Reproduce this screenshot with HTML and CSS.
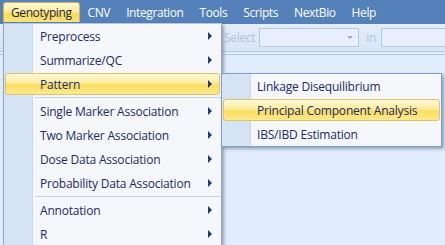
FILE: index.html
```html
<!DOCTYPE html>
<html lang="en">
<head>
  <meta charset="UTF-8" />
  <title>Genotyping Menu</title>
  <link rel="stylesheet" href="styles.css">
</head>
<body>
  <div class="app">
    <div class="menubar">
      <span class="menubar-item active">Genotyping</span>
      <span class="menubar-item">CNV</span>
      <span class="menubar-item">Integration</span>
      <span class="menubar-item">Tools</span>
      <span class="menubar-item">Scripts</span>
      <span class="menubar-item">NextBio</span>
      <span class="menubar-item">Help</span>
    </div>

    <div class="toolbar">
      <div class="toolbar-group">
        <span class="tb-label">Select</span>
        <div class="combo"><span class="combo-arrow"></span></div>
        <span class="tb-label tb-in">in</span>
        <div class="combo combo-wide"></div>
      </div>
    </div>

    <div class="workspace"></div>

    <!-- Genotyping dropdown -->
    <div class="menu main-menu">
      <div class="menu-item">Preprocess<span class="arrow"></span></div>
      <div class="menu-item">Summarize/QC<span class="arrow"></span></div>
      <div class="menu-item hot">Pattern<span class="arrow"></span></div>
      <div class="menu-sep"></div>
      <div class="menu-item">Single Marker Association<span class="arrow"></span></div>
      <div class="menu-item">Two Marker Association<span class="arrow"></span></div>
      <div class="menu-item">Dose Data Association<span class="arrow"></span></div>
      <div class="menu-item">Probability Data Association<span class="arrow"></span></div>
      <div class="menu-sep"></div>
      <div class="menu-item">Annotation<span class="arrow"></span></div>
      <div class="menu-item">R<span class="arrow"></span></div>
    </div>

    <!-- Pattern submenu -->
    <div class="menu sub-menu">
      <div class="menu-item">Linkage Disequilibrium</div>
      <div class="menu-item hot">Principal Component Analysis</div>
      <div class="menu-item">IBS/IBD Estimation</div>
    </div>
  </div>
</body>
</html>
```

FILE: styles.css
```css
body {
  margin: 0;
  font-family: 'Open Sans', 'Noto Sans', sans-serif;
  font-size: 12px;
  overflow: hidden;
}

.app {
  position: relative;
  width: 445px;
  height: 245px;
  overflow: hidden;
  background: #e1edfd;
  display: flex;
  flex-direction: column;
}

/* Menu bar */
.menubar {
  height: 24px;
  flex-shrink: 0;
  background: #5481b9;
  display: flex;
  align-items: flex-start;
  padding-left: 3px;
}

.menubar-item {
  height: 20px;
  margin-top: 2px;
  padding: 0 7px;
  line-height: 19px;
  color: #fff;
  letter-spacing: -0.4px;
  border: 1px solid transparent;
  border-bottom: none;
  box-sizing: border-box;
}

.menubar-item.active {
  color: #15284b;
  border-color: #d6b34e;
  border-radius: 3px 3px 0 0;
  background: linear-gradient(#fefadf, #fde98f 50%, #fbdb55 51%, #fce27a);
}

/* Toolbar */
.toolbar {
  height: 27px;
  flex-shrink: 0;
  background: linear-gradient(#e4edf8, #d9e6f6);
  border-bottom: 1px solid #b3c8e3;
  display: flex;
  align-items: center;
}

.toolbar-group {
  display: flex;
  align-items: center;
  margin-left: 224px;
}

.tb-label {
  color: #b2c2d6;
  letter-spacing: -0.3px;
}

.tb-in {
  margin: 0 5px 0 7px;
}

.combo {
  width: 100px;
  height: 19px;
  margin-left: 4px;
  box-sizing: border-box;
  border: 1px solid #b4c9e4;
  background: #e6effb;
  display: flex;
  align-items: center;
  justify-content: flex-end;
  padding-right: 5px;
}

.combo-wide {
  width: 70px;
  margin-left: 0;
}

.combo-arrow {
  border-top: 3px solid #9aaabd;
  border-left: 3px solid transparent;
  border-right: 3px solid transparent;
}

.workspace {
  flex: 1;
  border-top: 2px solid #e3ecf8;
  box-shadow: inset 0 1px 0 #b3c8e3;
  background: #e1edfd;
}

/* Dropdown menus */
.menu {
  position: absolute;
  box-sizing: border-box;
  display: flex;
  flex-direction: column;
  border: 1px solid #8fa9cd;
  background: linear-gradient(to right, #d5e3f4 0 28px, #c9d8eb 28px 29px, #f5f7fa 29px);
  box-shadow: 2px 2px 3px rgba(60, 70, 90, 0.45);
}

.main-menu {
  left: 3px;
  top: 23px;
  width: 219px;
  height: 250px;
  border-top-color: #b7c6d8;
}

.sub-menu {
  left: 221px;
  top: 73px;
  width: 221px;
  height: 74px;
  border-color: #7b9fd2;
}

.menu-item {
  height: 22px;
  flex-shrink: 0;
  margin: 1px;
  box-sizing: border-box;
  border: 1px solid transparent;
  border-radius: 3px;
  display: flex;
  align-items: center;
  padding-left: 34px;
  color: #1d2a6b;
  letter-spacing: -0.2px;
  white-space: nowrap;
}

.sub-menu .menu-item {
  padding-left: 33px;
}

.menu-item.hot {
  border-color: #e1c267;
  background: linear-gradient(#fef8d8, #fdec9c 45%, #fbde5e 55%, #fde98f);
}

.arrow {
  margin-left: auto;
  margin-right: 7px;
  border-left: 4px solid #1c3b85;
  border-top: 4px solid transparent;
  border-bottom: 4px solid transparent;
}

.menu-sep {
  height: 3px;
  flex-shrink: 0;
  margin-left: 31px;
  background: linear-gradient(transparent 1px, #c5d5ea 1px 2px, transparent 2px);
}
```
